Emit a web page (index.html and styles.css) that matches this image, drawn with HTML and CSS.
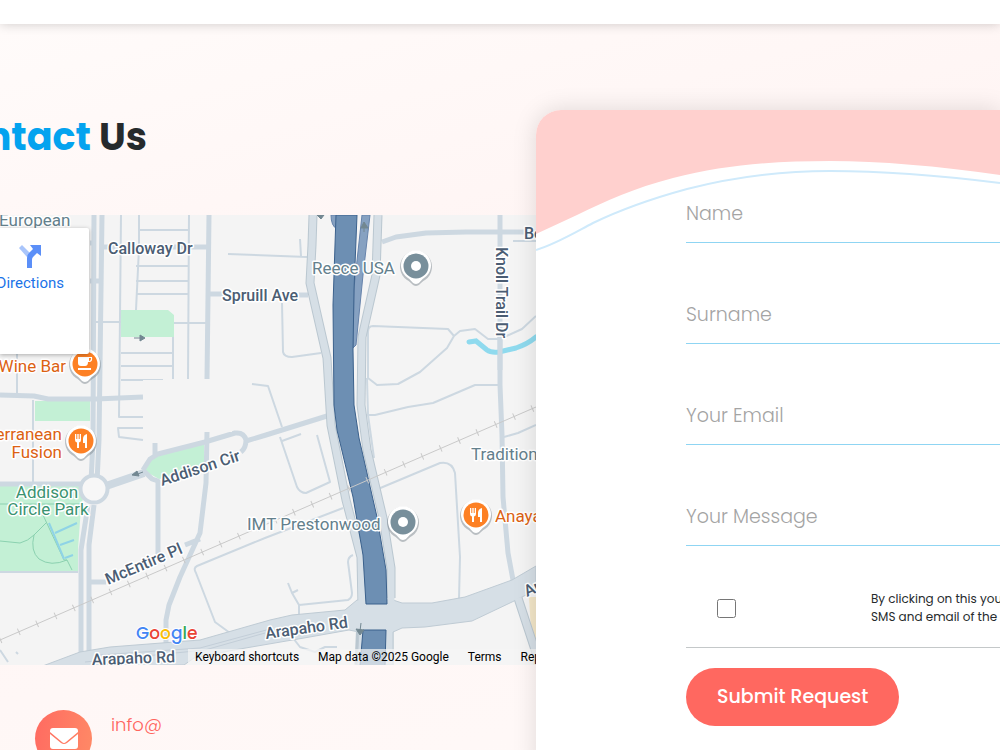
FILE: index.html
```html
<!DOCTYPE html>
<html lang="en">
<head>
    <meta charset="UTF-8">
    <meta name="viewport" content="width=device-width, initial-scale=1.0">
    <title>Contact Us</title>
    <link rel="stylesheet" href="styles.css">
</head>
<body>
    <header class="navbar"></header>
    <main class="contact">
        <section class="info">
            <h1 class="title"><span class="title-text"><span class="accent">Contact</span> Us</span></h1>
            <div class="map">
                <svg class="map-canvas" viewBox="0 215 536 450" preserveAspectRatio="xMinYMin slice" role="img" aria-label="Map">
                    <defs>
                        <g id="pin">
                            <path d="M0 20C-3 20-4 17-9 14A16 16 0 1 1 9 14C4 17 3 20 0 20z" fill="#7d8890" opacity=".5"/>
                            <path d="M0 18C-3 18-4 15-8 12A15 15 0 1 1 8 12C4 15 3 18 0 18z" fill="#fff"/>
                            <circle r="12.5"/>
                        </g>
                        <g id="fork" fill="#fff">
                            <path d="M-6-7h1.3v5h1v-5h1.4v5h1v-5H0v6q0 2-2 2.500V7h-2V1.500Q-6 1-6-1zM6-7v14H4V2H2v-4q0-4 4-5z"/>
                        </g>
                    </defs>
                    <rect y="215" width="1200" height="450" fill="#f4f4f4"/>
                    <!-- parks -->
                    <g fill="#c3f0d5">
                        <path d="M121 310h47l6 5v22h-53zM35 401h55v20H35zM0 486h86l-5 21-3 43v22H0zM143 470l10-13 51-14v27l-45 9z"/>
                    </g>
                    <g class="path-green">
                        <path d="M0 504h80M43 515l21 45M64 560l3 0 5 10M46 523l-12 12q-4 16 5 24 12 8 28 1M0 541l20 2q8-2 14-8"/>
                    </g>
                    <path class="path-water" d="M49 523l15 36M55 533l22-10M60 545l14-5M65 558l8-3"/>
                    <path d="M529 597h8v68h-4z" fill="#f3e6c8"/>
                    <!-- small streets -->
                    <g class="road thin">
                        <path d="M121 215l-2 202h24M143 428h-25l1 9 24 3M139 215v33l-3 62M189 215l-1 164M139 230h50M136 266h53M136 281h53M136 294h53M174 323h33M96 322h25M121 353h52M121 366h52M121 380h42M173 337v42"/>
                        <path d="M17 353v43M33 400v84M228 254l79 3M300 239l1 17M282 303l1 49q1 5 9 5l29-4M252 384l16 2 14 41"/>
                        <path d="M368 332q0-6 5-6l75 3 6 7-7 12-27 24-22 12-21 1-9-7zM454 336l6-5 15-2 13 10h12l22-10 14-13M365 415h10l33-8 25-4 42-18h25M367 378l1 37 6 43"/>
                        <path d="M280 437l17 50q3 6 9 6l24-11-13-47M282 441l19-7M343 508l-78 30-68 28q-4 2-1 7l19 49 15 11M378 489l62-26q12-2 15 10l5 84-1 42"/>
                        <path d="M288 583l4 10 7 12v10M292 593l6-3M299 605l49-5q4-2 4-7l-4-31q0-5 5-7M293 638l7 9 15 5 10-5h12M504 437l14-4 18-8M513 241h24M0 572h78"/>
                        <path d="M0 650l8 12M16 652l2 2"/>
                    </g>
                    <!-- local roads -->
                    <g class="road">
                        <path d="M94 215l-1 225-2 42M102 215l-3 225-2 42M88 505l-7 45v105M94 505l-5 40v110M0 484h85M0 395l34 1 14 3h48l47-2"/>
                        <path d="M102 247h107M209 215l-2 164M90 243h5M90 281h10M209 294h14M299 295h9M110 485l33-13M143 470l7-11 8-5 47-12 30-9q9-1 11 7 0 8-5 12M246 441l20-6 61-19M143 470l9 9 6 2v75M155 443v12"/>
                        <path d="M207 432l-1 51-6 50-20 44-11 28-3 15v30M89 582h17M185 545l15-6M500 215v170l2 50 1 62 5 56 5 27M382 242l14-5 30-4 40-1h71"/>
                    </g>
                    <path class="wide" d="M106 486l38-13"/>
                    <circle cx="94" cy="489" r="13.500" fill="#f7f7f7" stroke="#cdd8e1" stroke-width="4"/>
                    <rect x="143" y="380" width="89" height="52" fill="#f4f4f4"/>
                    <!-- arterial roads -->
                    <g class="frontage-edge">
                        <path d="M313 215l-1 30-2 38 17 75 4 67 15 75 15 57 1 50M378 215l-2 60-14 62-1 68 6 45 16 68 8 50v30M389 620v45M361 620l-2 45M518 598l22 67"/>
                    </g>
                    <path class="arterial" d="M40 667l40-15 30-5 90-7 35-10 35-10 22-5 53-5 12-10h36l9 3h30l33-6 47-17 24-14v24l-24 12-40 19-47 6-23 1-9 4v33h-36l2-33-10-2-45 8-70 12-40 8-10 7z"/>
                    <g class="frontage">
                        <path d="M313 215l-1 30-2 38 17 75 4 67 15 75 15 57 1 56M378 215l-2 60-14 62-1 68 6 45 16 68 8 50v40M518 598l22 67"/>
                    </g>
                    <path class="arterial-line" d="M85 662l120-12 60-17M100 655l100-7 70-19"/>
                    <!-- freeway -->
                    <g class="freeway">
                        <path class="ramp" d="M362 215h8l-7 60-7 70-3 3 1-60zM331 215h6v14q-6-3-6-14z"/>
                        <path d="M336 215h21l-3 75-1 60 1 55 5 33 18 79 9 53 1 34h-21l-3-49-10-58-16-67-3-25-1-100z"/>
                        <path d="M363 630h23l-1 36h-25z"/>
                    </g>
                    <path d="M0 640L536 407" stroke="#c9c9c9" stroke-width="1"/>
                    <path d="M0 640L536 407" stroke="#c9c9c9" stroke-width="7" stroke-dasharray="1 19"/>
                    <path d="M469 342l7-1 11 9q4 3 12 2l17-4q12-4 20-11" fill="none" stroke="#8fdaee" stroke-width="5" stroke-linecap="round"/>
                    <path d="M500 330v40" stroke="#cdd8e1" stroke-width="5"/>
                    <g class="arrows">
                        <path d="M134 338h8M143 472l-8 3M364 232v-8M361 623l-1 8"/>
                        <path d="M140 335l5 3-5 3zM132 475l5-4 2 5zM361 228l3-6 4 6zM356 629l4 6 4-5zM317 215h7l-3 4z"/>
                    </g>
                    <!-- labels -->
                    <g class="label street">
                        <text x="108" y="254">Calloway Dr</text>
                        <text x="222" y="301">Spruill Ave</text>
                        <text x="524" y="239">Belt Line</text>
                        <text transform="translate(496 247) rotate(90)">Knoll Trail Dr</text>
                        <text transform="translate(162 486) rotate(-18)">Addison Cir</text>
                        <text transform="translate(108 585) rotate(-23)">McEntire Pl</text>
                        <text transform="translate(92 665) rotate(-2)">Arapaho Rd</text>
                        <text transform="translate(266 639) rotate(-8)">Arapaho Rd</text>
                        <text transform="translate(527 597) rotate(-25)">Arapaho Rd</text>
                    </g>
                    <g class="label place">
                        <text x="-1" y="226">European</text>
                        <text x="312" y="274">Reece USA</text>
                        <text x="247" y="530">IMT Prestonwood</text>
                        <text x="471" y="460">Traditions</text>
                    </g>
                    <g class="label park">
                        <text x="47" y="498" text-anchor="middle">Addison</text>
                        <text x="48" y="515" text-anchor="middle">Circle Park</text>
                    </g>
                    <g class="label food">
                        <text x="66" y="372" text-anchor="end">Wine Bar</text>
                        <text x="62" y="440" text-anchor="end">Mediterranean</text>
                        <text x="62" y="458" text-anchor="end">Fusion</text>
                        <text x="495" y="522">Anaya's</text>
                    </g>
                    <!-- pins -->
                    <g transform="translate(416 266)"><use href="#pin" fill="#788f9b"/><circle r="5" fill="#fff"/></g>
                    <g transform="translate(403 522)"><use href="#pin" fill="#788f9b"/><circle r="5" fill="#fff"/></g>
                    <g transform="translate(476 515)"><use href="#pin" fill="#fd8024"/><use href="#fork"/></g>
                    <g transform="translate(81 441)"><use href="#pin" fill="#fd8024"/><use href="#fork"/></g>
                    <g transform="translate(85 364)">
                        <use href="#pin" fill="#fd8024"/>
                        <path d="M-7-7H7q1 5-3 5H3q0 4-3 4h-4q-3 0-3-3zM4-6v3q2 0 2-3zM-7 4H6v2H-7z" fill="#fff"/>
                    </g>
                    <text class="google" x="136" y="639"><tspan fill="#4285f4">G</tspan><tspan fill="#ea4335">o</tspan><tspan fill="#fbbc05">o</tspan><tspan fill="#4285f4">g</tspan><tspan fill="#34a853">l</tspan><tspan fill="#ea4335">e</tspan></text>
                </svg>
                <div class="place-card">
                    <a class="directions" href="#">
                        <svg viewBox="0 0 24 24" width="24" height="24" aria-hidden="true">
                            <path d="M1 4l3-3 8 8-3 4z" fill="#a9c5fb"/>
                            <path d="M9 24V14q0-3 2-5l4-4-3-4h11v11l-4-3-4 4q-1 1-1 3v8z" fill="#5b8ff8"/>
                        </svg>
                        <span>Directions</span>
                    </a>
                </div>
                <div class="attribution">
                    <button type="button">Keyboard shortcuts</button>
                    <span>Map data ©2025 Google</span>
                    <a href="#">Terms</a>
                    <a href="#">Report a map error</a>
                </div>
            </div>
            <div class="email">
                <span class="email-icon">
                    <svg viewBox="0 0 28 22" width="28" height="22" aria-hidden="true">
                        <path d="M0 3q0-3 3-3h22q3 0 3 3v1L16 14q-2 2-4 0L0 4zM0 6l11 9q3 2 6 0L28 6v12q0 3-3 3H3q-3 0-3-3z" fill="#fff"/>
                    </svg>
                </span>
                <a href="#">info@</a>
            </div>
        </section>
        <section class="form-card">
            <svg class="wave" viewBox="0 0 464 142" preserveAspectRatio="none" aria-hidden="true">
                <path d="M0 0H464V65C400 56 345 51 294 51C238 51 188 55 137 68C98 78 70 91 41 105L0 124z" fill="#ffd0ce"/>
                <path d="M0 140C20 134 38 123 57 113C86 99 118 88 151 79C198 67 248 61 294 61C350 61 408 66 464 73" fill="none" stroke="#cfeafb" stroke-width="2"/>
            </svg>
            <form class="form">
                <input class="field" type="text" placeholder="Name" aria-label="Name">
                <input class="field" type="text" placeholder="Surname" aria-label="Surname">
                <input class="field" type="email" placeholder="Your Email" aria-label="Your Email">
                <textarea class="field message" rows="1" placeholder="Your Message" aria-label="Your Message"></textarea>
                <div class="consent">
                    <input type="checkbox" id="consent">
                    <label for="consent">By clicking on this you agree to receive<br>SMS and email of the latest updates</label>
                </div>
                <button class="submit" type="submit">Submit Request</button>
            </form>
        </section>
    </main>
</body>
</html>
```
FILE: styles.css
```css
* {
    box-sizing: border-box;
}
body {
    margin: 0;
    font-family: Poppins, Inter, sans-serif;
    color: #262a2c;
    background: #fff7f6;
    overflow: hidden;
}
.navbar {
    position: relative;
    height: 24px;
    background: #fff;
    box-shadow: 0 0 12px rgba(0, 0, 0, 0.2);
}
.contact {
    display: grid;
    grid-template-columns: 536fr 464fr;
    min-height: 726px;
    background: linear-gradient(165deg, #fffbfa 0%, #fff5f4 35%, #fff9f8 100%);
}
.info {
    min-width: 0;
    padding-top: 83px;
}
.title {
    display: flex;
    justify-content: flex-end; /* long title runs off to the left */
    width: 147px;
    margin: 0 0 48px;
    font-size: 38px;
    line-height: 60px;
    font-weight: 700;
    white-space: nowrap;
}
.accent {
    color: #04a3ef;
}

/* map */
.map {
    position: relative;
    height: 450px;
    overflow: hidden;
}
.map-canvas {
    display: block;
    width: 100%;
    height: 100%;
}
.road {
    fill: none;
    stroke: #cdd8e1;
    stroke-width: 5;
    stroke-linejoin: round;
}
.thin {
    stroke-width: 2;
}
.wide {
    stroke: #cdd8e1;
    stroke-width: 8;
}
.path-green {
    fill: none;
    stroke: #8bd1b0;
    stroke-width: 1;
}
.path-water {
    fill: none;
    stroke: #8fd3e6;
    stroke-width: 2;
}
.frontage {
    fill: none;
    stroke: #d6dfe6;
    stroke-width: 7;
    stroke-linejoin: round;
}
.frontage-edge {
    fill: none;
    stroke: #bac7d0;
    stroke-width: 9;
    stroke-linejoin: round;
}
.arterial {
    fill: #d6dfe6;
    stroke: #bfcbd4;
}
.arterial-line {
    fill: none;
    stroke: #c3ced8;
}
.freeway {
    fill: #6d8fb3;
    stroke: #3b618c;
}
.ramp {
    fill: #86a1c1;
    stroke: #6683ab;
}
.arrows {
    fill: #728791;
    stroke: #728791;
}
.label {
    font-family: Roboto, sans-serif;
    font-size: 17px;
    paint-order: stroke;
    stroke: #fff;
    stroke-width: 3;
    stroke-linejoin: round;
}
.street {
    fill: #4b5d73;
    font-size: 16px;
    font-weight: 500;
}
.place {
    fill: #63808c;
}
.park {
    fill: #3a9270;
}
.food {
    fill: #dc6213;
}
.google {
    font-family: Poppins, Inter, sans-serif;
    font-size: 17px;
    font-weight: 500;
    paint-order: stroke;
    stroke: #fff;
    stroke-width: 2;
}
.place-card {
    position: absolute;
    top: 13px;
    left: 0;
    display: flex;
    justify-content: flex-end;
    width: 89px;
    height: 126px;
    padding: 16px 25px;
    background: #fff;
    border-radius: 0 2px 2px 0;
    box-shadow: 0 1px 4px rgba(0, 0, 0, 0.3);
}
.directions {
    display: flex;
    flex-direction: column;
    align-items: center;
    gap: 6px;
    font-family: Roboto, sans-serif;
    font-size: 15px;
    line-height: 18px;
    color: #1a73e8;
    text-decoration: none;
}
.attribution {
    position: absolute;
    left: 188px;
    right: 0;
    bottom: 0;
    display: flex;
    gap: 19px;
    padding: 0 7px;
    background: rgba(245, 245, 245, 0.7);
    font-family: Roboto, sans-serif;
    font-size: 12px;
    line-height: 16px;
    color: #000;
    white-space: nowrap;
}
.attribution button {
    padding: 0;
    border: 0;
    background: none;
    font: inherit;
    color: inherit;
}
.attribution a {
    color: inherit;
    text-decoration: none;
}

.email {
    display: flex;
    gap: 19px;
    padding: 45px 0 0 35px;
}
.email-icon {
    display: flex;
    align-items: center;
    justify-content: center;
    width: 57px;
    height: 57px;
    border-radius: 50%;
    background: linear-gradient(100deg, #ff6a61, #ff8a66);
}
.email a {
    font-size: 18px;
    line-height: 30px;
    font-weight: 300;
    color: #ff655e;
    text-decoration: none;
}

/* form */
.form-card {
    position: relative;
    min-width: 0;
    margin-top: 86px;
    background: #fff;
    border-radius: 25px 0 0 0;
    box-shadow: 0 0 24px rgba(0, 0, 0, 0.13);
    overflow: hidden;
}
.wave {
    position: absolute;
    top: 0;
    left: 0;
    width: 100%;
    height: 142px;
}
.form {
    position: relative;
    display: flex;
    flex-direction: column;
    align-items: flex-start;
    padding: 75px 0 24px 150px;
}
.field {
    display: block;
    width: 100%;
    height: 58px;
    margin: 0 0 43px;
    padding: 0;
    border: 0;
    border-bottom: 1px solid #8fd5f3;
    background: none;
    font-family: inherit;
    font-size: 19px;
    line-height: 58px;
    font-weight: 300;
    resize: none;
    outline: none;
}
.field::placeholder {
    color: #a4a4a4;
    opacity: 1;
}
.message {
    margin-bottom: 30px;
    overflow: hidden;
}
.consent {
    display: flex;
    align-items: center;
    gap: 135px;
    width: 100%;
    height: 72px;
    margin-bottom: 20px;
    padding: 0 0 7px 31px;
    border-bottom: 1px solid #c4c8c9;
}
.consent input {
    flex: none;
    width: 19px;
    height: 19px;
    margin: 0;
}
.consent label {
    font-size: 12px;
    line-height: 18px;
    white-space: nowrap;
}
.submit {
    height: 58px;
    padding: 0 31px 2px;
    border: 0;
    border-radius: 29px;
    background: #ff6860;
    color: #fff;
    font-family: inherit;
    font-size: 19px;
    font-weight: 500;
}
```
